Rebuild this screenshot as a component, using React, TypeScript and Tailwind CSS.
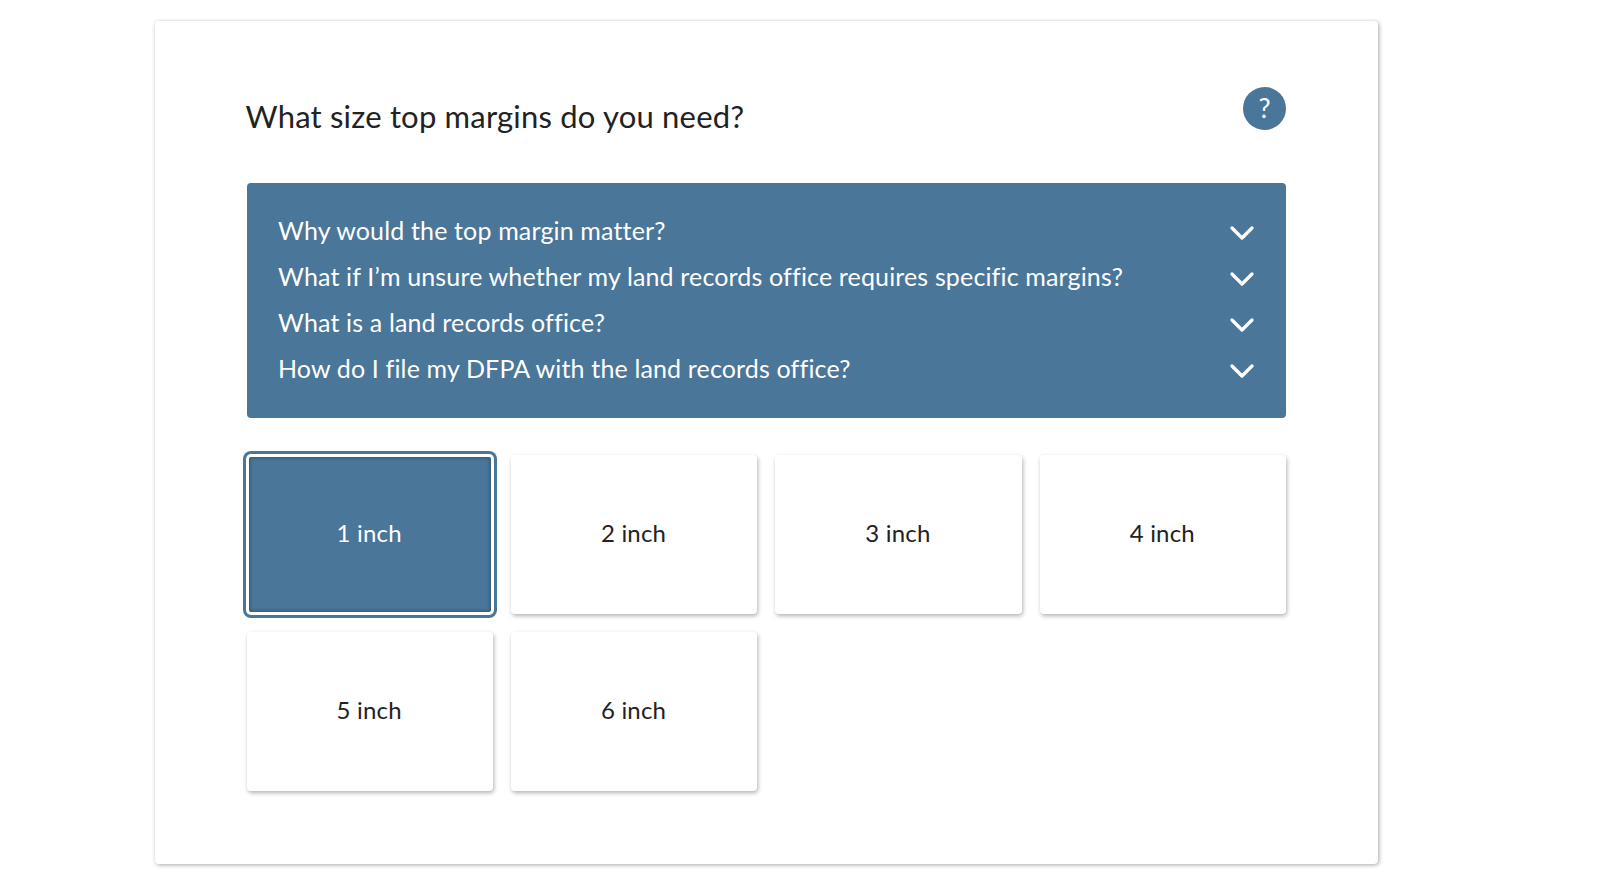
import React from 'react';
import { ChevronDown } from 'lucide-react';

const faqs = [
  'Why would the top margin matter?',
  'What if I’m unsure whether my land records office requires specific margins?',
  'What is a land records office?',
  'How do I file my DFPA with the land records office?',
];

const sizes = ['1 inch', '2 inch', '3 inch', '4 inch', '5 inch', '6 inch'];

export default function App() {
  return (
    <div className="min-h-[887px] bg-white font-['Lato','Noto_Sans',sans-serif] overflow-hidden">
      <div className="ml-[155px] mt-[21px] w-[1223px] h-[843px] bg-white rounded-[4px] shadow-[1px_1px_4px_rgba(0,0,0,0.35)] pl-[91.5px] pr-[92px] pt-[66px]">
        <div className="flex items-start justify-between h-[96px]">
          <h1 className="text-[31px] leading-[40px] mt-[9px] -ml-[1px] text-[#222222] tracking-[0.2px]">What size top margins do you need?</h1>
          <button className="w-[43px] h-[43px] pb-[3px] rounded-full bg-[#4a7699] text-white text-[27px] leading-none flex items-center justify-center">?</button>
        </div>
        <div className="h-[235px] bg-[#4a7699] rounded-[4px] pl-[31.5px] pr-[24px] pt-[26px]">
          {faqs.map((q) => (
            <div key={q} className="flex items-start justify-between h-[46px] text-white">
              <span className="text-[25px] leading-[43.5px] tracking-[0.15px]">{q}</span>
              <ChevronDown className="w-[40px] h-[40px] mt-[4px]" strokeWidth={2} />
            </div>
          ))}
        </div>
        <div className="grid grid-cols-4 gap-x-[18px] gap-y-[18px] mt-[37px]">
          {sizes.map((s, i) => (
            <button
              key={s}
              className={
                i === 0
                  ? 'h-[159px] pb-[3px] pr-[1px] rounded-[4px] border-2 border-white bg-[#4a7699] text-white text-[24px] tracking-[0.2px] shadow-[inset_0_0_4px_rgba(0,0,0,0.45),0_0_0_1px_#ffffff,0_0_0_4px_#4a7699]'
                  : 'h-[159px] pb-[3px] pr-[1px] rounded-[4px] bg-white text-[#222222] text-[24px] tracking-[0.2px] shadow-[1px_2px_4px_rgba(0,0,0,0.3)]'
              }
            >
              {s}
            </button>
          ))}
        </div>
      </div>
    </div>
  );
}
